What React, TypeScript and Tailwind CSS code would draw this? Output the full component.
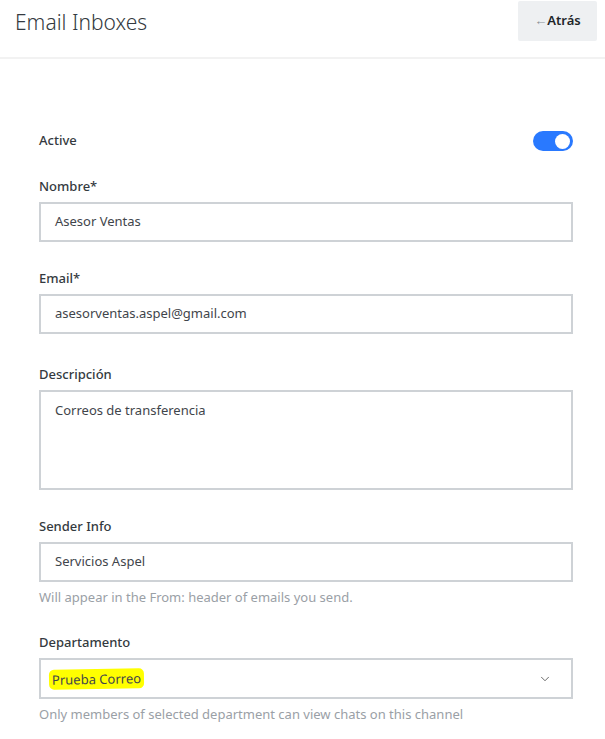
import { ChevronDown } from "lucide-react";

const font = { fontFamily: '"Noto Sans", "Open Sans", sans-serif' };

function Field({ label, children, help }: { label: string; children: React.ReactNode; help?: string }) {
  return (
    <div className="flex flex-col">
      <label className="text-[13px] font-medium text-[#343a40] leading-[18px] mb-[7px]">{label}</label>
      {children}
      {help && <p className="text-[13px] text-[#9aa0a6] leading-[18px] mt-[6px]">{help}</p>}
    </div>
  );
}

function TextBox({ value }: { value: string }) {
  return (
    <div className="h-10 border-2 border-[#ced2d6] flex items-center px-[14px] text-[13px] text-[#3f454b]">
      {value}
    </div>
  );
}

export default function App() {
  return (
    <div className="min-h-screen bg-white" style={font}>
      <header className="flex items-start justify-between pl-[15px] pr-2 pt-[1px] h-[59px] border-b-2 border-[#f2f2f2]">
        <h1 className="text-[21px] font-light text-[#343a40] leading-[40px] pt-[1px]">Email Inboxes</h1>
        <button className="w-[79px] h-10 bg-[#eef0f2] rounded-[2px] text-[13px] font-semibold text-[#212529] flex items-center justify-center">
          <span className="text-[#8a9096] text-[13px] font-normal">←</span>Atrás
        </button>
      </header>

      <div className="pl-[39px] pr-[32px] pt-[72px] flex flex-col">
        <div className="flex items-center justify-between h-5 mb-[26px]">
          <span className="text-[13px] font-medium text-[#343a40]">Active</span>
          <div className="w-10 h-5 rounded-full bg-[#2979ff] flex items-center justify-end pr-[3px]">
            <div className="w-[15px] h-[15px] rounded-full bg-white" />
          </div>
        </div>

        <div className="flex flex-col gap-[27px]">
          <Field label="Nombre*">
            <TextBox value="Asesor Ventas" />
          </Field>
          <Field label="Email*">
            <TextBox value="asesorventas.aspel@gmail.com" />
          </Field>
          <div className="mt-1">
            <Field label="Descripción">
              <div className="h-[100px] border-2 border-[#ced2d6] px-[14px] pt-[9px] text-[13px] text-[#3f454b]">
                Correos de transferencia
              </div>
            </Field>
          </div>
          <Field label="Sender Info" help="Will appear in the From: header of emails you send.">
            <TextBox value="Servicios Aspel" />
          </Field>
          <Field label="Departamento" help="Only members of selected department can view chats on this channel">
            <div className="h-[41px] border-2 border-[#ced2d6] flex items-center justify-between pl-[8px] pr-[19px] text-[13px] text-[#3f454b]">
              <span className="bg-[#ffff00] px-[3px] rounded-[5px] leading-[20px] -rotate-1">Prueba Correo</span>
              <ChevronDown size={14} strokeWidth={1.5} className="text-[#555]" />
            </div>
          </Field>
        </div>
      </div>
    </div>
  );
}
